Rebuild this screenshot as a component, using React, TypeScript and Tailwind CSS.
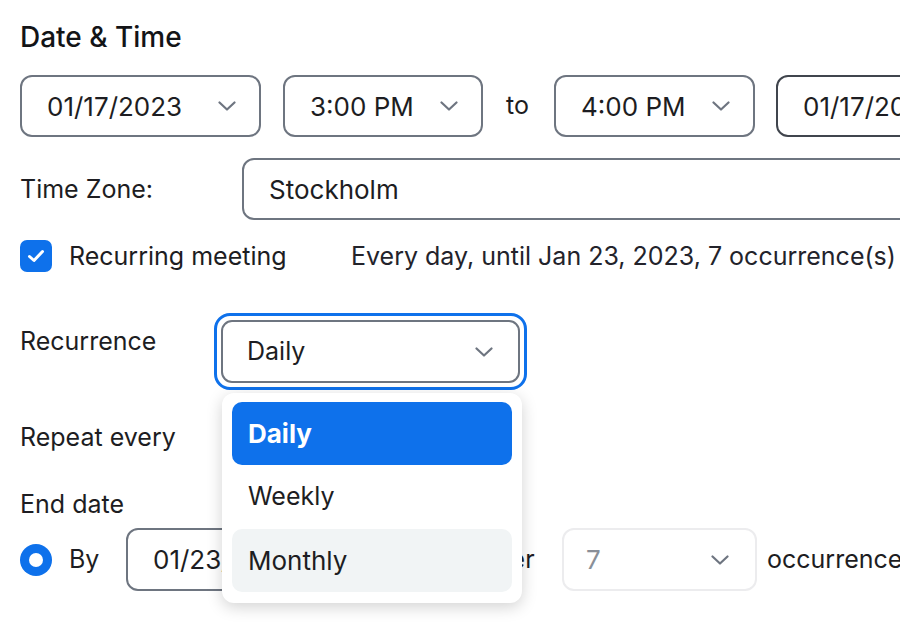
import type { ReactNode } from 'react';

const font = { fontFamily: 'Inter, "Noto Sans", sans-serif' };

function Chevron({ className = '' }: { className?: string }) {
  return (
    <svg width="18" height="10" viewBox="0 0 18 10" fill="none" className={className}>
      <path
        d="M1.5 1.5 9 8.5l7.5-7"
        stroke="currentColor"
        strokeWidth="2.2"
        strokeLinecap="round"
        strokeLinejoin="round"
      />
    </svg>
  );
}

function Box({
  children,
  className = '',
  chevron = true,
}: {
  children: ReactNode;
  className?: string;
  chevron?: boolean;
}) {
  return (
    <div
      className={`flex h-[62px] shrink-0 items-center justify-between rounded-[12px] border-2 border-[#6e7580] bg-white pl-[25px] pr-[23px] text-[26px] text-[#1d1d22] ${className}`}
    >
      <span className="whitespace-nowrap">{children}</span>
      {chevron && <Chevron className="shrink-0 text-[#6e7580]" />}
    </div>
  );
}

export default function App() {
  return (
    <div className="h-[644px] w-[900px] overflow-hidden bg-white pl-[20px] text-[#1d1d22]" style={font}>
      {/* Title */}
      <h2 className="pt-[21px] text-[28px] font-medium leading-[33px] text-[#131417]">Date &amp; Time</h2>

      {/* Date / time row */}
      <div className="mt-[21px] flex items-center">
        <Box className="w-[241px]">01/17/2023</Box>
        <Box className="ml-[22px] w-[200px]">3:00 PM</Box>
        <span className="ml-[23px] w-[48px] shrink-0 text-[25px]">to</span>
        <Box className="w-[201px]">4:00 PM</Box>
        <Box className="ml-[21px] w-[240px] border-[#40454d]" chevron={false}>
          01/17/2023
        </Box>
      </div>

      {/* Time zone */}
      <div className="mt-[21px] flex items-center">
        <span className="w-[222px] shrink-0 text-[25px] leading-[30px]">Time Zone:</span>
        <div className="flex h-[62px] w-[700px] shrink-0 items-center rounded-[12px] border-2 border-[#6e7580] pl-[25px] text-[26px]">
          Stockholm
        </div>
      </div>

      {/* Recurring */}
      <div className="mt-[20px] flex items-center whitespace-nowrap text-[25px] leading-[30px]">
        <span className="flex h-[32px] w-[32px] shrink-0 items-center justify-center rounded-[7px] bg-[#0e71eb]">
          <svg width="18" height="14" viewBox="0 0 18 14" fill="none">
            <path d="M2.5 7.5 7 11.5 15.5 2.5" stroke="white" strokeWidth="3" strokeLinecap="round" strokeLinejoin="round" />
          </svg>
        </span>
        <span className="ml-[17px] w-[282px] shrink-0">Recurring meeting</span>
        <span className="text-[#23232b]">Every day, until Jan 23, 2023, 7 occurrence(s)</span>
      </div>

      {/* Recurrence */}
      <div className="mt-[41px] flex items-start">
        <span className="mt-[13px] w-[194px] shrink-0 text-[25px] leading-[30px]">Recurrence</span>
        <div className="relative">
          <div className="rounded-[16px] border-[3px] border-[#0e71eb] p-[4px]">
            <div className="flex h-[63px] w-[299px] items-center justify-between rounded-[11px] border-2 border-[#6e7580] pl-[24px] pr-[25px] text-[25px]">
              <span>Daily</span>
              <Chevron className="text-[#6e7580]" />
            </div>
          </div>

          {/* Dropdown menu */}
          <div className="absolute left-[8px] top-[80px] z-10 w-[300px] rounded-[12px] bg-white px-[10px] pb-[11px] pt-[9px] shadow-[0_4px_16px_rgba(0,0,0,0.18)]">
            <div className="flex h-[63px] items-center rounded-[10px] bg-[#0e71eb] pl-[16px] text-[26px] font-bold text-white">
              Daily
            </div>
            <div className="flex h-[64px] items-center pl-[16px] text-[25px]">Weekly</div>
            <div className="flex h-[63px] items-center rounded-[10px] bg-[#f1f4f5] pl-[16px] text-[26px]">
              Monthly
            </div>
          </div>
        </div>
      </div>

      {/* Repeat every */}
      <div className="mt-[32px] text-[25px] leading-[30px]">Repeat every</div>

      {/* End date */}
      <div className="mt-[37px] text-[25px] leading-[30px]">End date</div>

      <div className="mt-[9px] flex items-center whitespace-nowrap text-[25px]">
        <span className="flex h-[32px] w-[32px] shrink-0 items-center justify-center rounded-full bg-[#0e71eb]">
          <span className="h-[14px] w-[14px] rounded-full bg-white" />
        </span>
        <span className="ml-[17px] w-[57px] shrink-0">By</span>
        <Box className="h-[63px] w-[280px] pl-[25px] text-[26px]" chevron={false}>
          01/23/2023
        </Box>
        <span className="ml-[22px] h-[32px] w-[32px] shrink-0 rounded-full border-2 border-[#9aa0a8]" />
        <span className="ml-[17px] w-[85px] shrink-0">After</span>
        <div className="flex h-[63px] w-[195px] shrink-0 items-center justify-between rounded-[12px] border-2 border-[#ececee] pl-[22px] pr-[26px] text-[26px] text-[#8a8f98]">
          <span>7</span>
          <Chevron className="text-[#6e7580]" />
        </div>
        <span className="ml-[10px]">occurrence(s)</span>
      </div>
    </div>
  );
}
